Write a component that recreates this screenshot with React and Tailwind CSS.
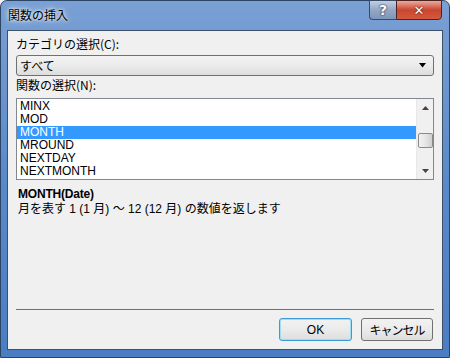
import React from 'react';

const items = ['MINX', 'MOD', 'MONTH', 'MROUND', 'NEXTDAY', 'NEXTMONTH'];

const App = () => {
  return (
    <div className="w-[450px] h-[358px] bg-[#f0f0f0]">
      <div className="w-[450px] h-[358px] flex flex-col rounded-t-[7px] border border-[#2c4466] bg-gradient-to-b from-[#7aa0d4] via-[#5a89c9] to-[#4b7dc2] font-['Noto_Sans_CJK_JP','Noto_Sans',sans-serif] text-black">
        {/* title bar */}
        <div className="h-[29px] flex items-start justify-between">
          <div className="pl-[7px] pt-[6px] text-[12px] leading-[16px] text-black [text-shadow:0_0_6px_#ffffff,0_0_3px_#ffffff]">
            関数の挿入
          </div>
          <div className="flex mr-[7px] -mt-px">
            <div className="w-[27px] h-[20px] flex items-center justify-center rounded-bl-[4px] border border-[#3a4a66] border-r-0 bg-gradient-to-b from-[#c3d0e3] via-[#93a6c4] to-[#7f96bb] text-white text-[14px] font-bold leading-none font-['DejaVu_Sans',sans-serif] [text-shadow:0_0_2px_#1e2d4a,0_0_1px_#1e2d4a]">
              ?
            </div>
            <div className="w-[46px] h-[20px] flex items-center justify-center rounded-br-[4px] border border-[#4a2420] bg-gradient-to-b from-[#e9a99c] via-[#c9452f] to-[#d55a3f] text-white text-[13px] font-bold leading-none font-['DejaVu_Sans',sans-serif] [text-shadow:0_0_2px_#5a1a10,0_0_1px_#5a1a10]">
              ✕
            </div>
          </div>
        </div>

        {/* client area */}
        <div className="mx-[6px] h-[320px] flex flex-col border border-[#3c5068] bg-[#f0f0f0] px-[8px]">
          <div className="mt-[5px] text-[12px] leading-[16px]">カテゴリの選択(C):</div>
          <div className="mt-[3px] h-[21px] flex items-center justify-between rounded-[3px] border border-[#707070] bg-gradient-to-b from-[#f3f3f3] via-[#ebebeb] to-[#dddddd] pl-[3px] pr-[6px]">
            <span className="text-[12px] leading-[16px]">すべて</span>
            <svg width="8" height="5" viewBox="0 0 8 5">
              <path d="M0 0 H7 L3.5 4.5 Z" fill="#000" />
            </svg>
          </div>
          <div className="mt-px text-[12px] leading-[16px]">関数の選択(N):</div>
          <div className="mt-[5px] h-[82px] flex border border-[#828790] bg-white">
            <div className="flex-1 pt-px font-['Liberation_Sans',Arial,sans-serif] text-[12px]">
              {items.map((it) => (
                <div
                  key={it}
                  className={
                    it === 'MONTH'
                      ? 'h-[13px] leading-[13px] pl-[3px] bg-[#3399ff] text-white'
                      : 'h-[13px] leading-[13px] pl-[3px] text-black'
                  }
                >
                  {it}
                </div>
              ))}
            </div>
            <div className="w-[17px] flex flex-col items-center bg-[#f0f0f0] border-l border-[#e8e8e8]">
              <div className="h-[17px] flex items-center justify-center">
                <svg width="7" height="4" viewBox="0 0 7 4">
                  <path d="M3.5 0 L7 4 H0 Z" fill="#444" />
                </svg>
              </div>
              <div className="mt-[17px] w-[15px] h-[15px] rounded-[2px] border border-[#8a8a8a] bg-gradient-to-r from-[#f2f2f2] via-[#e6e6e6] to-[#cfcfcf]" />
              <div className="mt-auto h-[17px] flex items-center justify-center">
                <svg width="7" height="4" viewBox="0 0 7 4">
                  <path d="M0 0 H7 L3.5 4 Z" fill="#444" />
                </svg>
              </div>
            </div>
          </div>
          <div className="mt-[8px] pl-[2px]">
            <div className="text-[12px] leading-[13px] font-bold font-['Liberation_Sans',Arial,sans-serif] tracking-[-0.2px]">
              MONTH(Date)
            </div>
            <div className="mt-px text-[12px] leading-[14px] font-['Liberation_Sans','Noto_Sans_CJK_JP',sans-serif]">
              月を表す 1 (1 月) ～ 12 (12 月) の数値を返します
            </div>
          </div>
          <div className="mt-auto h-px bg-[#6f6f6f]" />
          <div className="mt-[8px] mb-[8px] flex justify-end gap-[9px] pr-px">
            <button className="w-[73px] h-[23px] rounded-[3px] border border-[#3c9ad6] bg-gradient-to-b from-[#f2f2f2] via-[#ebebeb] to-[#dddddd] text-[12px] leading-none font-['Liberation_Sans',Arial,sans-serif] shadow-[inset_0_0_0_1px_#9fdcf6]">
              OK
            </button>
            <button className="w-[72px] h-[23px] rounded-[3px] border border-[#707070] bg-gradient-to-b from-[#f2f2f2] via-[#ebebeb] to-[#dddddd] text-[12px] leading-none tracking-[-1px]">
              キャンセル
            </button>
          </div>
        </div>
      </div>
    </div>
  );
};

export default App;
